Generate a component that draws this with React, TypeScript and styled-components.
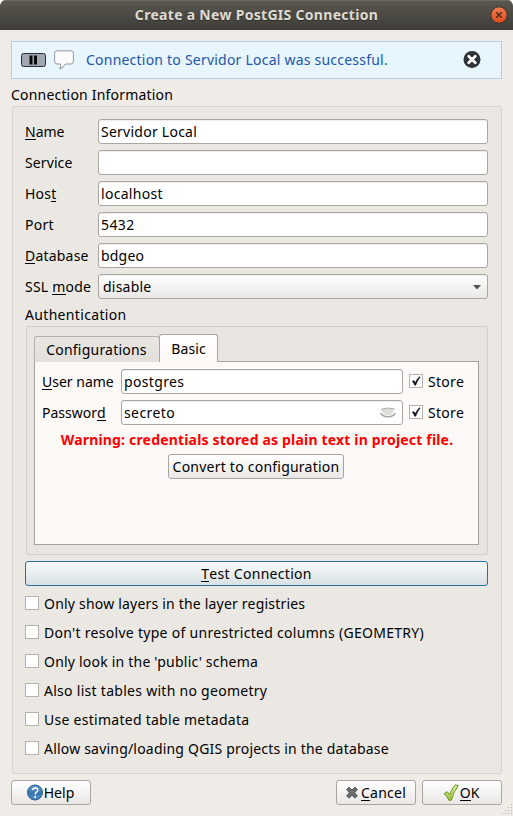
import React from "react";
import styled, { createGlobalStyle } from "styled-components";

const GlobalStyle = createGlobalStyle`
  *, *::before, *::after { box-sizing: border-box; }
  html, body { margin: 0; background: #fff; }
  body, input, button { font-family: "Noto Sans", "Open Sans", sans-serif; font-size: 14px; color: #000; }
`;

const Dialog = styled.main`
  width: 513px;
  height: 816px;
  display: flex;
  flex-direction: column;
  overflow: hidden;
  border-radius: 6px 6px 0 0;
  background: #efebe7;
  line-height: 20px;
`;

const TitleBar = styled.header`
  height: 30px;
  flex: none;
  display: grid;
  grid-template-columns: 28px 1fr 28px;
  align-items: center;
  justify-items: center;
  background: linear-gradient(#5b5a52, #514f48 30%, #3e3d39);
  box-shadow: inset 0 1px #6b6960;
`;

const Title = styled.h1<{ $spacing: number }>`
  grid-column: 2;
  margin: 0;
  font-size: 14px;
  font-weight: 700;
  color: #dfdbd2;
  white-space: nowrap;
  text-shadow: 0 1px #2f2e2a;
  letter-spacing: ${(p) => p.$spacing}px;
`;

const Text = styled.span<{ $spacing?: number }>`
  white-space: nowrap;
  letter-spacing: ${(p) => p.$spacing ?? 0}px;
`;

const Mnemonic = styled.span`
  box-shadow: 0 -1px #000 inset;
  display: inline-block;
  height: 18px;
  line-height: 20px;
  vertical-align: top;
`;

const Content = styled.div`
  flex: 1;
  display: flex;
  flex-direction: column;
  padding: 11px 0 0 11px;
`;

const MessageBar = styled.div`
  height: 38px;
  width: 491px;
  display: flex;
  align-items: center;
  padding: 0 20px 0 9px;
  border: 1px solid #b3cfe4;
  background: #e7f5fe;
  color: #2456a8;
  svg { flex: none; }
`;

const MessageIcons = styled.div`
  display: flex;
  align-items: center;
  gap: 7px;
`;

const Message = styled(Text)`
  flex: 1;
  margin-left: 12px;
`;

const GroupTitle = styled.div`
  height: 20px;
  margin: 6px 0 1px;
  flex: none;
`;

const ConnectionGroup = styled.section`
  width: 490px;
  height: 668px;
  flex: none;
  margin-left: 1px;
  display: flex;
  flex-direction: column;
  padding: 12px 14px 0 12px;
  border: 1px solid #d7d3cf;
  border-radius: 2px;
  background: #ebe8e3;
`;

const Form = styled.div<{ $columns: string }>`
  display: grid;
  grid-template-columns: ${(p) => p.$columns};
  grid-auto-rows: 25px;
  row-gap: 6px;
  align-items: center;
`;

const Field = styled.div`
  height: 25px;
  min-width: 0;
  display: flex;
  align-items: center;
  padding-right: 6px;
  border: 1px solid #aaa6a2;
  border-radius: 3px;
  background: #fff;
  box-shadow: inset 0 1px #f0efee;
`;

const Input = styled.input<{ $spacing?: number }>`
  flex: 1;
  min-width: 0;
  height: 21px;
  padding: 0 2px;
  border: 0;
  outline: 0;
  background: transparent;
  letter-spacing: ${(p) => p.$spacing ?? 0}px;
`;

const Select = styled(Field)`
  justify-content: space-between;
  padding-left: 4px;
  background: linear-gradient(#fff, #e9e7e5);
`;

const AuthGroup = styled.section`
  width: 462px;
  height: 229px;
  flex: none;
  margin-left: 1px;
  padding: 7px 8px 9px 7px;
  border: 1px solid #d2cecb;
  border-radius: 2px;
  background: #e8e4e0;
`;

const Tabs = styled.div`
  height: 28px;
  display: flex;
  align-items: flex-end;
`;

const Tab = styled.div<{ $active?: boolean; $width: number }>`
  width: ${(p) => p.$width}px;
  height: ${(p) => (p.$active ? 28 : 26)}px;
  margin-left: ${(p) => (p.$active ? -1 : 0)}px;
  display: flex;
  justify-content: center;
  align-items: center;
  padding-top: ${(p) => (p.$active ? 0 : 1)}px;
  padding-right: ${(p) => (p.$active ? 0 : 1)}px;
  border: 1px solid ${(p) => (p.$active ? "#aaa6a2" : "#b5b1ad")};
  border-bottom: 0;
  border-radius: 3px 3px 0 0;
  background: ${(p) => (p.$active ? "linear-gradient(#fff, #fdf9f6)" : "linear-gradient(#e9e6e2, #e3e0dc)")};
  position: relative;
  z-index: ${(p) => (p.$active ? 1 : 0)};
`;

const Pane = styled.div`
  height: 184px;
  margin-top: -1px;
  display: flex;
  flex-direction: column;
  padding: 7px 6px 0 7px;
  border: 1px solid #a5a19e;
  background: #fdf9f6;
`;

const Warning = styled.strong<{ $spacing: number }>`
  height: 20px;
  margin: 5px 0 4px;
  text-align: center;
  white-space: nowrap;
  color: #f00;
  letter-spacing: ${(p) => p.$spacing}px;
`;

const Button = styled.button<{ $width: number; $primary?: boolean; $gap?: number; $shift?: number }>`
  width: ${(p) => p.$width}px;
  height: 25px;
  flex: none;
  display: flex;
  align-items: center;
  justify-content: center;
  gap: ${(p) => p.$gap ?? 1}px;
  padding: 0 ${(p) => p.$shift ?? 0}px 0 0;
  line-height: 20px;
  border: 1px solid ${(p) => (p.$primary ? "#28709a" : "#a8a4a0")};
  border-radius: 3px;
  background: ${(p) => (p.$primary ? "linear-gradient(#fafbfb, #d8e0e4)" : "linear-gradient(#fff, #e9e7e5)")};
`;

const ConvertButton = styled(Button)`
  align-self: center;
  margin-right: 2px;
`;

const TestButton = styled(Button)`
  margin-top: 6px;
`;

const Options = styled.div`
  display: grid;
  grid-auto-rows: 20px;
  row-gap: 9px;
  margin-top: 8px;
`;

const CheckLabel = styled.label<{ $indent: number }>`
  display: flex;
  align-items: center;
  gap: 5px;
  margin-left: ${(p) => p.$indent}px;
`;

const Box = styled.span`
  width: 14px;
  height: 14px;
  flex: none;
  display: flex;
  border: 1px solid #b5b1ad;
  background: #fff;
  margin-bottom: 2px;
`;

const Footer = styled.footer`
  flex: 1;
  display: flex;
  justify-content: space-between;
`;

const FooterButtons = styled.div`
  width: 491px;
  display: flex;
  gap: 6px;
  padding-top: 6px;
`;

const HelpButton = styled(Button)`
  margin-right: auto;
`;

const Grip = styled.svg`
  flex: none;
  align-self: flex-end;
  margin: 0 1px 1px 0;
`;

type LabelProps = { text: string; mnemonic?: number; spacing?: number };

function Label({ text, mnemonic, spacing }: LabelProps) {
  if (mnemonic === undefined) return <Text $spacing={spacing}>{text}</Text>;
  return (
    <Text $spacing={spacing}>
      {text.slice(0, mnemonic)}
      <Mnemonic>{text[mnemonic]}</Mnemonic>
      {text.slice(mnemonic + 1)}
    </Text>
  );
}

type CheckProps = { label: string; checked?: boolean; spacing?: number; indent?: number };

function Check({ label, checked, spacing, indent = 0 }: CheckProps) {
  return (
    <CheckLabel $indent={indent}>
      <Box>
        {checked && (
          <svg width="12" height="12" viewBox="0 0 12 12">
            <path d="M2.2 6.2l1.7-.8 1.3 2.2Q7 4 9.500 1.600l.7.5Q7.500 5.500 5.800 10.300H4.700Q3.700 7.700 2.200 6.200Z" fill="#111" stroke="#111" strokeWidth=".4" />
          </svg>
        )}
      </Box>
      <Text $spacing={spacing}>{label}</Text>
    </CheckLabel>
  );
}

const CloseIcon = () => (
  <svg width="18" height="18" viewBox="0 0 18 18">
    <defs>
      <linearGradient id="close" x1="0" y1="0" x2="0" y2="1">
        <stop offset="0" stopColor="#f47c50" />
        <stop offset="1" stopColor="#dc4b1d" />
      </linearGradient>
    </defs>
    <circle cx="9" cy="9" r="8.200" fill="url(#close)" stroke="#37342f" />
    <path d="M6.200 6.200l5.600 5.600M11.800 6.200l-5.600 5.600" stroke="#45281c" strokeWidth="1.300" />
  </svg>
);

const PauseIcon = () => (
  <svg width="26" height="16" viewBox="0 0 26 16">
    <rect x=".5" y="1.500" width="24" height="13" rx="2" fill="#9fa8b0" stroke="#2c3033" />
    <path d="M8.500 3.500h3v9h-3zM13 3.500h3v9h-3z" fill="#0a0a0a" />
  </svg>
);

const BubbleIcon = () => (
  <svg width="20" height="20" viewBox="0 0 20 20">
    <path
      d="M3 .8H17Q19.400.8 19.400 3.200V11.500Q19.400 14 17 14H11.500Q9.500 17.600 5.500 19Q7.300 17 6.500 14H3Q.6 14 .6 11.500V3.200Q.6.8 3 .8Z"
      fill="#fafbfc"
      stroke="#92979c"
    />
  </svg>
);

const DismissIcon = () => (
  <svg width="18" height="18" viewBox="0 0 18 18">
    <circle cx="9" cy="8.500" r="8.500" fill="#303437" />
    <path d="M5.700 5.200l6.600 6.600M12.300 5.200l-6.600 6.600" stroke="#fff" strokeWidth="2.700" strokeLinecap="round" />
  </svg>
);

const EyeIcon = () => (
  <svg width="16" height="12" viewBox="0 0 16 12">
    <path d="M1.500 2Q8-.2 14 2Q14 7.800 8 8.600Q2 7.800 1.500 2Z" fill="#dfdedc" />
    <path d="M1 2.600Q7-.4 14.600 2" fill="none" stroke="#aaa8a5" />
    <path d="M.5 6.200Q2.500 9.400 8 9.900Q13.500 9.400 15.500 6.200" fill="none" stroke="#a5a3a0" strokeWidth="1.300" />
  </svg>
);

const HelpIcon = () => (
  <svg width="17" height="18" viewBox="0 0 17 18">
    <defs>
      <linearGradient id="help" x1="0" y1="0" x2="0" y2="1">
        <stop offset="0" stopColor="#699bcc" />
        <stop offset=".55" stopColor="#3676b4" />
        <stop offset="1" stopColor="#4b8dca" />
      </linearGradient>
    </defs>
    <circle cx="8" cy="8.500" r="7.500" fill="url(#help)" stroke="#285b8e" />
    <path d="M5.500 6.200Q5.700 3.900 8.200 3.900Q10.800 4 10.700 6.200Q10.700 7.400 9.400 8.200Q8.200 9 8.200 10.500" fill="none" stroke="#fff" strokeWidth="1.500" />
    <circle cx="8.200" cy="12.900" r="1.100" fill="#fff" />
  </svg>
);

const CancelIcon = () => (
  <svg width="12" height="14" viewBox="0 0 12 14">
    <path d="M3 1.300L6 4L9 1.300L11.300 3.500L8.600 6.700L11.300 9.900L9 12.100L6 9.300L3 12.100L.7 9.900L3.400 6.700L.7 3.500Z" fill="#707070" stroke="#4c4c4c" strokeLinejoin="round" />
  </svg>
);

const OkIcon = () => (
  <svg width="17" height="18" viewBox="0 0 17 18">
    <defs>
      <linearGradient id="ok" x1="0" y1="0" x2="0" y2="1">
        <stop offset="0" stopColor="#e4f2a4" />
        <stop offset="1" stopColor="#91bd35" />
      </linearGradient>
    </defs>
    <path d="M1 9.500L4.400 7.800L6.600 10.800Q9 4.500 12 .9L15.400 1.500Q10.500 7.500 8.300 16.300H5.900Q4 12 1 9.500Z" fill="url(#ok)" stroke="#6d9929" strokeLinejoin="round" />
  </svg>
);

const fields: Array<LabelProps & { value: string; valueSpacing?: number }> = [
  { text: "Name", mnemonic: 0, value: "Servidor Local", valueSpacing: 0.25 },
  { text: "Service", value: "", spacing: 0.1 },
  { text: "Host", mnemonic: 3, value: "localhost", valueSpacing: 0.3, spacing: 0.2 },
  { text: "Port", value: "5432", valueSpacing: 0.4, spacing: 0.25 },
  { text: "Database", mnemonic: 0, value: "bdgeo", valueSpacing: 0.2, spacing: 0.2 },
];

const options: CheckProps[] = [
  { label: "Only show layers in the layer registries", spacing: 0.2 },
  { label: "Don't resolve type of unrestricted columns (GEOMETRY)", spacing: 0.29 },
  { label: "Only look in the 'public' schema", spacing: 0.21 },
  { label: "Also list tables with no geometry", spacing: 0.28 },
  { label: "Use estimated table metadata", spacing: 0.27 },
  { label: "Allow saving/loading QGIS projects in the database", spacing: 0.2 },
];

const gripDots = [[9, 0], [9, 3], [6, 3], [9, 6], [6, 6], [3, 6], [9, 9], [6, 9], [3, 9], [0, 9]];

export default function App() {
  return (
    <>
      <GlobalStyle />
      <Dialog>
        <TitleBar>
          <Title $spacing={0.3}>Create a New PostGIS Connection</Title>
          <CloseIcon />
        </TitleBar>
        <Content>
          <MessageBar>
            <MessageIcons>
              <PauseIcon />
              <BubbleIcon />
            </MessageIcons>
            <Message $spacing={0.22}>Connection to Servidor Local was successful.</Message>
            <DismissIcon />
          </MessageBar>
          <GroupTitle><Label text="Connection Information" spacing={0.19} /></GroupTitle>
          <ConnectionGroup>
            <Form $columns="73px 390px">
              {fields.map((f) => (
                <React.Fragment key={f.text}>
                  <Label text={f.text} mnemonic={f.mnemonic} spacing={f.spacing} />
                  <Field><Input defaultValue={f.value} $spacing={f.valueSpacing} /></Field>
                </React.Fragment>
              ))}
              <Label text="SSL mode" mnemonic={4} spacing={0.22} />
              <Select>
                <Label text="disable" spacing={0.22} />
                <svg width="8" height="4" viewBox="0 0 8 4"><path d="M0 0H8L4.500 4h-1Z" fill="#555" /></svg>
              </Select>
            </Form>
            <GroupTitle><Label text="Authentication" spacing={0.33} /></GroupTitle>
            <AuthGroup>
              <Tabs>
                <Tab $width={126}><Label text="Configurations" spacing={0.22} /></Tab>
                <Tab $active $width={59}><Label text="Basic" spacing={0.1} /></Tab>
              </Tabs>
              <Pane>
                <Form $columns="79px 282px 1fr">
                  <Label text="User name" mnemonic={0} />
                  <Field><Input defaultValue="postgres" $spacing={0.35} /></Field>
                  <Check label="Store" checked spacing={0.3} indent={6} />
                  <Label text="Password" mnemonic={7} />
                  <Field><Input defaultValue="secreto" $spacing={0.4} /><EyeIcon /></Field>
                  <Check label="Store" checked spacing={0.3} indent={6} />
                </Form>
                <Warning $spacing={0.18}>Warning: credentials stored as plain text in project file.</Warning>
                <ConvertButton $width={176}><Label text="Convert to configuration" spacing={0.23} /></ConvertButton>
              </Pane>
            </AuthGroup>
            <TestButton $width={463} $primary><Label text="Test Connection" mnemonic={0} spacing={0.3} /></TestButton>
            <Options>{options.map((o) => <Check key={o.label} {...o} />)}</Options>
          </ConnectionGroup>
          <Footer>
            <FooterButtons>
              <HelpButton $width={80} $gap={0} $shift={1}><HelpIcon /><Label text="Help" /></HelpButton>
              <Button $width={80} $gap={3}><CancelIcon /><Label text="Cancel" mnemonic={0} spacing={0.25} /></Button>
              <Button $width={80} $gap={0} $shift={2}><OkIcon /><Label text="OK" mnemonic={0} /></Button>
            </FooterButtons>
            <Grip width="10" height="11" viewBox="0 0 10 11">
              {gripDots.map(([x, y]) => <rect key={`${x}-${y}`} x={x} y={y} width="1" height="1" fill="#b8b2ac" />)}
            </Grip>
          </Footer>
        </Content>
      </Dialog>
    </>
  );
}
